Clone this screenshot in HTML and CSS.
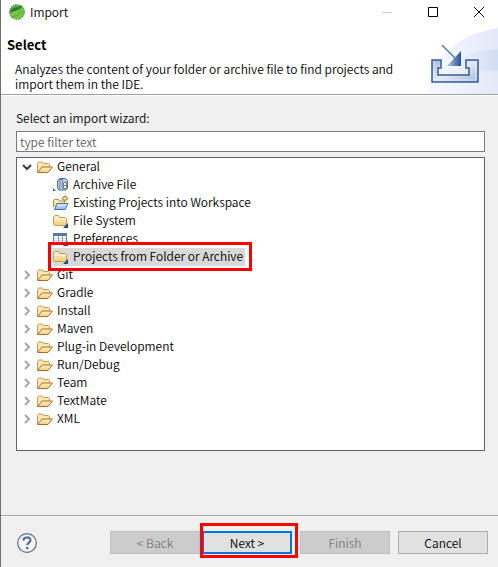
FILE: index.html
```html
<!DOCTYPE html>
<html lang="en">
<head>
<meta charset="utf-8">
<meta name="viewport" content="width=device-width, initial-scale=1">
<title>Import</title>
<link rel="stylesheet" href="styles.css">
</head>
<body>
<svg class="defs" aria-hidden="true">
  <defs>
    <linearGradient id="tan" x1="0" y1="0" x2="0" y2="1"><stop offset="0" stop-color="#fff3cc"/><stop offset="1" stop-color="#f3cc7c"/></linearGradient>
    <linearGradient id="blue" x1="0" y1="0" x2="0" y2="1"><stop offset="0" stop-color="#e8f0fb"/><stop offset="1" stop-color="#8fb2e2"/></linearGradient>
    <symbol id="open" viewBox="0 0 16 16">
      <path d="M.5 13V4.500l1-1.500h4l1 1.500h5l1 1V8" fill="#fbe6b0" stroke="#c39a58"/>
      <path d="M.500 13.500L5 8h10.500l-4.500 5.500z" fill="url(#tan)" stroke="#a9702c"/>
    </symbol>
    <symbol id="closed" viewBox="0 0 16 16">
      <path d="M.500 11.500V4L2 2.500h3.500L7 4.500h5.500l1 1v7h-12z" fill="url(#tan)" stroke="#c89a50"/>
      <path d="M1 6.500h12" stroke="#fff5d5"/>
      <path d="M15 10v5h-5z" fill="#0f5096"/>
    </symbol>
    <symbol id="archive" viewBox="0 0 16 16">
      <path d="M0 11v3h3z" fill="#176aa8"/>
      <path d="M4.500 11V4l2-2.500h6l2 2V11l-1.500 2H6z" fill="#b9cae4" stroke="#5270a6"/>
      <path d="M8 2v12" stroke="#5270a6" stroke-width="3"/>
      <path d="M8 3v11" stroke="#fff"/>
      <path d="M10.500 5.500h3v6h-3z" fill="#fffbe8" stroke="#8d8151"/>
      <path d="M11 8.500h2" stroke="#5270a6"/>
    </symbol>
    <symbol id="existing" viewBox="0 0 16 16">
      <path d="M.500 12V5.500l1-1h4l1 1.500h5v7" fill="url(#tan)" stroke="#b98a45"/>
      <path d="M1.500 14.500L4 8.500h11l-3 6z" fill="url(#blue)" stroke="#3f70b5"/>
      <path d="M12 0l3.500 3.500L12 7 8.500 3.500z" fill="#a98a42"/>
      <path d="M12 1.500v4M10 3.500h4" stroke="#fff1a5"/>
    </symbol>
    <symbol id="prefs" viewBox="0 0 16 16">
      <path d="M.500 2.500h13v11H.500z" fill="#fff" stroke="#6b82a7"/>
      <path d="M0 2h14v3H0z" fill="#5c77a6"/>
      <path d="M1 7.500h12M1 9.500h12M1 11.500h12" stroke="#cbd6e8"/>
      <path d="M5.500 5v8M9.500 5v8" stroke="#91a4c4"/>
      <path d="M15 10v5h-5z" fill="#0f5096"/>
    </symbol>
    <symbol id="right" viewBox="0 0 10 10"><path d="M3 1l4 4-4 4" fill="none" stroke="#a6a6a6" stroke-width="2"/></symbol>
    <symbol id="down" viewBox="0 0 10 10"><path d="M1 3l4 4 4-4" fill="none" stroke="#404040" stroke-width="2"/></symbol>
  </defs>
</svg>
<div class="window">
  <header class="titlebar">
    <svg class="logo" viewBox="0 0 18 18" aria-hidden="true">
      <circle cx="9" cy="9" r="7" fill="#5fb040"/>
      <circle cx="9" cy="9" r="7.300" fill="none" stroke="#3d963f" stroke-width="1.500" stroke-dasharray="1.300 1"/>
      <path d="M2 10C2 4 8 5 14 2.500 14 7 8 7 2 10z" fill="#25803c"/>
      <path d="M2 12C4 7 11 9 15 3.500c2 6-1 12.500-6 12.500-3 0-5-1-6-2z" fill="#7cc442"/>
      <path d="M4 13.500c4 0 8-2 10-6" fill="none" stroke="#4fa53f"/>
    </svg>
    <span class="caption">Import</span>
    <div class="controls">
      <button class="control" type="button" aria-label="Minimize" disabled><svg viewBox="0 0 10 10"><path d="M0 5.500h10" stroke="#ccc"/></svg></button>
      <button class="control" type="button" aria-label="Maximize"><svg viewBox="0 0 10 10"><path d="M.5.5h9v9h-9z" fill="none" stroke="#000"/></svg></button>
      <button class="control" type="button" aria-label="Close"><svg viewBox="0 0 10 10"><path d="M0 0l10 10M10 0L0 10" stroke="#000"/></svg></button>
    </div>
  </header>
  <section class="banner">
    <div class="intro">
      <h1>Select</h1>
      <p>Analyzes the content of your folder or archive file to find projects and import them in the IDE.</p>
    </div>
    <svg class="art" viewBox="0 0 75 70" aria-hidden="true">
      <defs>
        <linearGradient id="glow" x1="0" y1="0" x2="1" y2="0"><stop offset="0" stop-color="#f8faff"/><stop offset="1" stop-color="#e2eaf9"/></linearGradient>
        <linearGradient id="shade" x1="0" y1="0" x2="1" y2="0"><stop offset="0" stop-color="#e6eefa" stop-opacity="0"/><stop offset="1" stop-color="#d0ddf4"/></linearGradient>
        <linearGradient id="tray" x1="0" y1="0" x2="1" y2="1"><stop offset="0" stop-color="#a8bcdc"/><stop offset=".5" stop-color="#e2eaf6"/><stop offset="1" stop-color="#a5b9da"/></linearGradient>
        <linearGradient id="head" x1="0" y1="0" x2="1" y2="0"><stop offset="0" stop-color="#b8c8e2"/><stop offset="1" stop-color="#25518f"/></linearGradient>
      </defs>
      <path d="M2 70C6 38 32 10 75 4v66z" fill="url(#glow)"/>
      <path d="M22 40C40 30 55 27 75 25v22C54 46 40 48 22 58z" fill="url(#shade)"/>
      <path d="M9 36h9v8h-3v7h31v-7h-3v-8h12v22H9z" fill="url(#tray)" stroke="#365c98" stroke-width="1.500"/>
      <path d="M11 38v18h42V38" fill="none" stroke="#edf3fb" opacity=".7"/>
      <path d="M19 21l14 14" stroke="#547db4" stroke-width="1.500"/>
      <path d="M38 27v15H24z" fill="url(#head)"/>
    </svg>
  </section>
  <main class="content">
    <label for="filter">Select an import wizard:</label>
    <input id="filter" class="filter" type="text" placeholder="type filter text">
    <div class="panel">
      <ul class="tree">
        <li>
          <div class="row"><button class="twisty" type="button" aria-label="Collapse General"><svg><use href="#down"/></svg></button><svg class="icon"><use href="#open"/></svg><span>General</span></div>
          <ul class="children">
            <li class="row"><svg class="icon"><use href="#archive"/></svg><span>Archive File</span></li>
            <li class="row"><svg class="icon"><use href="#existing"/></svg><span>Existing Projects into Workspace</span></li>
            <li class="row"><svg class="icon"><use href="#closed"/></svg><span>File System</span></li>
            <li class="row"><svg class="icon"><use href="#prefs"/></svg><span>Preferences</span></li>
            <li class="row selected marked"><svg class="icon"><use href="#closed"/></svg><span>Projects from Folder or Archive</span></li>
          </ul>
        </li>
        <li class="row"><button class="twisty" type="button" aria-label="Expand Git"><svg><use href="#right"/></svg></button><svg class="icon"><use href="#open"/></svg><span>Git</span></li>
        <li class="row"><button class="twisty" type="button" aria-label="Expand Gradle"><svg><use href="#right"/></svg></button><svg class="icon"><use href="#open"/></svg><span>Gradle</span></li>
        <li class="row"><button class="twisty" type="button" aria-label="Expand Install"><svg><use href="#right"/></svg></button><svg class="icon"><use href="#open"/></svg><span>Install</span></li>
        <li class="row"><button class="twisty" type="button" aria-label="Expand Maven"><svg><use href="#right"/></svg></button><svg class="icon"><use href="#open"/></svg><span>Maven</span></li>
        <li class="row"><button class="twisty" type="button" aria-label="Expand Plug-in Development"><svg><use href="#right"/></svg></button><svg class="icon"><use href="#open"/></svg><span>Plug-in Development</span></li>
        <li class="row"><button class="twisty" type="button" aria-label="Expand Run/Debug"><svg><use href="#right"/></svg></button><svg class="icon"><use href="#open"/></svg><span>Run/Debug</span></li>
        <li class="row"><button class="twisty" type="button" aria-label="Expand Team"><svg><use href="#right"/></svg></button><svg class="icon"><use href="#open"/></svg><span>Team</span></li>
        <li class="row"><button class="twisty" type="button" aria-label="Expand TextMate"><svg><use href="#right"/></svg></button><svg class="icon"><use href="#open"/></svg><span>TextMate</span></li>
        <li class="row"><button class="twisty" type="button" aria-label="Expand XML"><svg><use href="#right"/></svg></button><svg class="icon"><use href="#open"/></svg><span>XML</span></li>
      </ul>
    </div>
  </main>
  <footer class="footer">
    <button class="help" type="button" aria-label="Help">
      <svg viewBox="0 0 20 20"><circle cx="10" cy="10" r="9.300" fill="#f5f7fb" stroke="#566a90" stroke-width="1.200"/><path d="M6.500 7.500C6.500 3.500 13.500 3.500 13.500 7.300c0 2.400-3.300 2.500-3.300 5" fill="none" stroke="#566a90" stroke-width="2.200"/><path d="M9 14h2.400v2.200H9z" fill="#566a90"/></svg>
    </button>
    <div class="pair">
      <button class="btn" type="button" disabled>&lt; Back</button>
      <div class="marked next"><button class="btn primary" type="button">Next &gt;</button></div>
    </div>
    <button class="btn" type="button" disabled>Finish</button>
    <button class="btn" type="button">Cancel</button>
  </footer>
</div>
</body>
</html>
```
FILE: styles.css
```css
* { box-sizing: border-box; }
body {
  margin: 0;
  background: #f0f0f0;
  color: #000;
  font: 350 12px/16px "Noto Sans CJK KR", "Noto Sans", sans-serif;
}
button, input { font: inherit; color: inherit; }
button { padding: 0; border: 0; background: none; }
svg { display: block; flex: none; }
ul { list-style: none; margin: 0; padding: 0; }
.defs { position: absolute; width: 0; height: 0; }
.window {
  display: flex;
  flex-direction: column;
  min-height: 100vh;
  border-left: 1px solid #6e6e6e;
}
.titlebar {
  display: flex;
  align-items: center;
  height: 24px;
  padding: 0 14px 0 7px;
  background: #fff;
}
.logo { width: 18px; height: 18px; }
.caption { margin-left: 4px; }
.controls { display: flex; gap: 36px; margin-left: auto; }
.control svg { width: 10px; height: 10px; }
.banner {
  display: flex;
  justify-content: space-between;
  background: #fff;
  border-bottom: 1px solid #a0a0a0;
}
.intro { padding: 13px 20px 0 6px; }
h1 { margin: 0; font-size: 13px; line-height: 16px; }
.intro p { margin: 8px 0 0 8px; line-height: 15px; }
.art { width: 75px; height: 70px; }
.content {
  display: flex;
  flex: 1;
  flex-direction: column;
  padding: 14px 13px 64px 15px;
  border-top: 1px solid #fff;
}
.filter {
  height: 21px;
  margin: 5px 0;
  padding: 0 3px;
  border: 1px solid #7a7a7a;
  background: #fff;
}
.filter::placeholder { color: #606060; opacity: 1; }
.panel {
  flex: 1;
  border: 1px solid #646464;
  background: #fff;
}
.tree { padding-left: 5px; }
.row { display: flex; align-items: center; width: max-content; height: 18px; }
.row span { padding: 0 2px 2px 4px; line-height: 16px; }
.children { padding-left: 31px; }
.twisty { width: 10px; height: 10px; margin-right: 5px; }
.twisty svg { width: 10px; height: 10px; }
.icon { width: 16px; height: 16px; }
.selected { background: #d9d9d9; }
.marked { position: relative; }
.marked::after {
  content: "";
  position: absolute;
  inset: -6px -7px -5px -5px;
  border: 3px solid #f00;
  pointer-events: none;
}
.footer {
  display: flex;
  align-items: center;
  gap: 8px;
  padding: 15px 10px 13px 16px;
  border-top: 1px solid #a0a0a0;
  box-shadow: inset 0 1px #fff;
}
.help { width: 20px; height: 20px; margin-right: auto; }
.help svg { width: 20px; height: 20px; }
.pair { display: flex; gap: 2px; }
.btn {
  display: block;
  width: 90px;
  height: 23px;
  border: 1px solid #adadad;
  background: #e1e1e1;
}
.btn:disabled { border-color: #bfbfbf; background: #ccc; color: #7c7c7c; }
.primary { border: 2px solid #0078d7; }
.next::after { inset: -8px -6px -4px -2px; }
```
